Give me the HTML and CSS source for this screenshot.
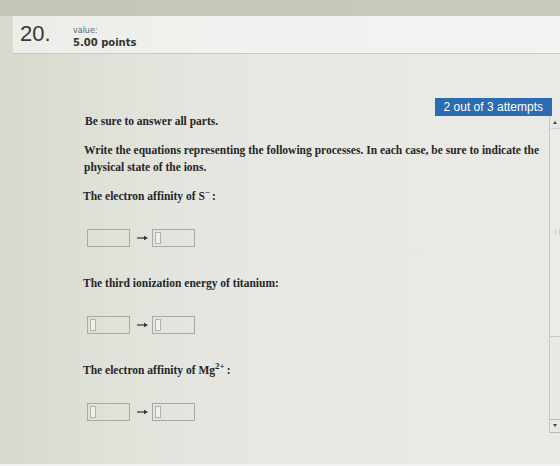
FILE: index.html
```html
<!DOCTYPE html>
<html lang="en">
<head>
    <meta charset="UTF-8">
    <meta name="viewport" content="width=device-width, initial-scale=1.0">
    <title>Question 20</title>
    <link rel="stylesheet" href="styles.css">
</head>
<body>
    <div class="tabs"></div>

    <header class="q-head">
        <div class="q-num">20.</div>
        <div class="q-value">
            <span class="q-label">value:</span>
            <span class="q-points">5.00 points</span>
        </div>
    </header>

    <main class="q-frame">
        <div class="attempts">2 out of 3 attempts</div>

        <div class="q-content">
            <p class="note">Be sure to answer all parts.</p>
            <p class="intro">Write the equations representing the following processes. In each case, be sure to indicate the physical state of the ions.</p>

            <p class="part">The electron affinity of S<sup>&minus;</sup>:</p>
            <div class="answer">
                <span class="box"></span>
                <svg class="arrow" width="11" height="6" viewBox="0 0 11 6"><path d="M0 3h8" stroke="#333" stroke-width="1.2"/><path d="M7 0.8L11 3L7 5.2z" fill="#333"/></svg>
                <span class="box"><span class="caret"></span></span>
            </div>

            <p class="part">The third ionization energy of titanium:</p>
            <div class="answer">
                <span class="box"><span class="caret"></span></span>
                <svg class="arrow" width="11" height="6" viewBox="0 0 11 6"><path d="M0 3h8" stroke="#333" stroke-width="1.2"/><path d="M7 0.8L11 3L7 5.2z" fill="#333"/></svg>
                <span class="box"><span class="caret"></span></span>
            </div>

            <p class="part">The electron affinity of Mg<sup>2+</sup>:</p>
            <div class="answer">
                <span class="box"><span class="caret"></span></span>
                <svg class="arrow" width="11" height="6" viewBox="0 0 11 6"><path d="M0 3h8" stroke="#333" stroke-width="1.2"/><path d="M7 0.8L11 3L7 5.2z" fill="#333"/></svg>
                <span class="box"><span class="caret"></span></span>
            </div>
        </div>

        <div class="scrollbar">
            <span class="sb-up"></span>
            <span class="sb-thumb"></span>
            <span class="sb-down"></span>
        </div>
    </main>
</body>
</html>
```

FILE: styles.css
```css
html, body {
    margin: 0;
    width: 560px;
    height: 466px;
    overflow: hidden;
}
body {
    background:
        linear-gradient(to top, #f2f2f0 2px, transparent 2px),
        linear-gradient(90deg, #d6d9cc 0%, #e1e3db 22%, #e8e9e4 55%, #e9e9e5 100%);
    color: #262626;
}

.tabs {
    height: 16px;
    background: linear-gradient(90deg, #c2c6b7 0%, #c8ccbe 100%);
}

/* question header */
.q-head {
    box-sizing: border-box;
    height: 38px;
    margin-left: 13px;
    padding-left: 7px;
    display: flex;
    border-bottom: 1px solid #cacac7;
    background: linear-gradient(90deg, #ececE8 0%, #f1f1ef 40%, #f2f2f0 100%);
}
.q-num {
    margin-top: 6px;
    width: 53px;
    font-family: "Liberation Sans", Arial, sans-serif;
    font-size: 22px;
    line-height: 24px;
    color: #383838;
}
.q-value {
    margin-top: 10px;
    display: flex;
    flex-direction: column;
    font-family: "DejaVu Sans", Verdana, sans-serif;
}
.q-label {
    font-size: 8px;
    line-height: 10px;
    color: #666;
}
.q-points {
    font-size: 10px;
    line-height: 13px;
    font-weight: bold;
    color: #333;
}

/* question body */
.q-frame {
    position: relative;
    margin-top: 44px;
    display: flex;
}
.attempts {
    position: absolute;
    top: 0;
    right: 8px;
    height: 18px;
    padding: 0 9px;
    background: #2b6cb2;
    color: #fff;
    font-family: "Liberation Sans", Arial, sans-serif;
    font-size: 12px;
    line-height: 18px;
}
.q-content {
    flex: 1;
    padding: 15px 0 0 83px;
    font-family: "Liberation Serif", "Times New Roman", serif;
    font-size: 11.5px;
    font-weight: bold;
    line-height: 17px;
}
.q-content p {
    margin: 0;
}
.note {
    padding-left: 2px;
}
.intro {
    margin-top: 12px !important;
    padding-left: 1px;
}
.part {
    margin-top: 12px !important;
}
.answer + .part {
    margin-top: 28px !important;
}
.part sup {
    font-size: 9px;
    line-height: 0;
    margin-right: 2px;
}

.answer {
    margin: 24px 0 0 4px;
    display: flex;
    align-items: center;
}
.box {
    box-sizing: border-box;
    width: 43px;
    height: 18px;
    padding: 2px 0 0 2px;
    border: 1px solid #a9aaa5;
}
.caret {
    display: block;
    box-sizing: border-box;
    width: 6px;
    height: 12px;
    border: 1px solid #b0b1ac;
    background: #efefeb;
}
.arrow {
    margin: 0 4px 0 7px;
}

/* scrollbar on the right of the question */
.scrollbar {
    box-sizing: border-box;
    width: 11px;
    height: 317px;
    margin-top: 18px;
    display: flex;
    flex-direction: column;
    border-left: 1px solid #c6c7c2;
    background: #e8e8e4;
}
.sb-up, .sb-down {
    position: relative;
    height: 12px;
}
.sb-up::after, .sb-down::after {
    content: "";
    position: absolute;
    left: 3px;
    border-left: 2px solid transparent;
    border-right: 2px solid transparent;
}
.sb-up::after {
    top: 5px;
    border-bottom: 3px solid #444;
}
.sb-down {
    margin-top: auto;
    border-top: 1px solid #b8b8b4;
    border-bottom: 1px solid #b8b8b4;
}
.sb-down::after {
    top: 4px;
    border-top: 3px solid #444;
}
.sb-thumb {
    position: relative;
    height: 207px;
    border-top: 1px solid #d3d3cf;
    border-bottom: 1px solid #c9c9c5;
    background: #ebebe7;
}
.sb-thumb::after {
    content: "";
    position: absolute;
    top: 100px;
    left: 5px;
    width: 3px;
    height: 6px;
    border-left: 1px solid #cfcfcb;
    border-right: 1px solid #cfcfcb;
}
```
